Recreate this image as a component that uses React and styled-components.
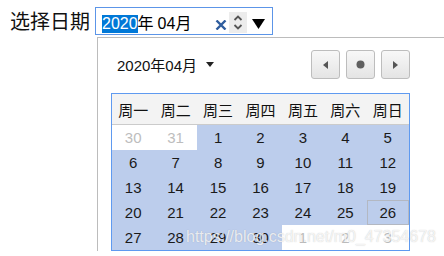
import React from "react";
import styled, { createGlobalStyle } from "styled-components";

const GlobalStyle = createGlobalStyle`
  html, body {
    margin: 0;
    padding: 0;
    background: #fff;
    overflow: hidden;
  }
  body {
    font-family: "Liberation Sans", "Noto Sans CJK SC", sans-serif;
  }
`;

const Page = styled.div`
  width: 444px;
  height: 256px;
  position: relative;
  padding: 7px 0 0 10px;
  box-sizing: border-box;
`;

const FieldRow = styled.div`
  display: flex;
  align-items: center;
  gap: 5px;
`;

const Label = styled.label`
  font-family: "Noto Sans CJK SC", sans-serif;
  font-size: 20px;
  line-height: 28px;
  color: #111;
`;

const InputWrap = styled.div`
  position: relative;
`;

const InputBox = styled.div`
  width: 178px;
  height: 28px;
  box-sizing: border-box;
  border: 1px solid #5c95e8;
  display: flex;
  align-items: center;
  padding: 6px 0 0 6px;
  font-size: 16px;
  color: #000;
`;

const Segment = styled.span`
  line-height: 18px;
  font-family: "Liberation Sans", "Noto Sans CJK SC", sans-serif;
  background: ${(p) => (p.$selected ? "#0078d7" : "transparent")};
  color: ${(p) => (p.$selected ? "#fff" : "#000")};
  margin-right: ${(p) => p.$gap || 0}px;
`;

const Controls = styled.div`
  margin-left: auto;
  display: flex;
  align-items: center;
  height: 100%;
`;

const ClearIcon = styled.svg`
  width: 12px;
  height: 10px;
  margin-right: 2px;
  margin-top: 1px;
`;

const Spinner = styled.div`
  width: 18px;
  height: 21px;
  background: #ececec;
  display: flex;
  align-items: center;
  justify-content: center;
  margin-top: -4px;
`;

const DropArrow = styled.svg`
  width: 13px;
  height: 10px;
  margin: 0 7px 0 5px;
`;

const Popup = styled.div`
  position: absolute;
  top: 30px;
  left: 2px;
  width: 360px;
  background: #fff;
  border-top: 1px solid #bcbcbc;
  border-left: 1px solid #bcbcbc;
  padding: 12px 0 0 13px;
  box-sizing: border-box;
`;

const PopHeader = styled.div`
  width: 299px;
  height: 29px;
  display: flex;
  align-items: center;
  justify-content: space-between;
`;

const MonthTitle = styled.div`
  display: flex;
  align-items: center;
  gap: 9px;
  padding-left: 6px;
  font-size: 15px;
  color: #111;
`;

const NavGroup = styled.div`
  display: flex;
  gap: 6px;
`;

const NavButton = styled.div`
  width: 29px;
  height: 29px;
  box-sizing: border-box;
  border: 1px solid #bdbdbd;
  border-radius: 3px;
  background: linear-gradient(#f8f8f8, #e4e4e4);
  display: flex;
  align-items: center;
  justify-content: center;
`;

const Table = styled.div`
  margin-top: 14px;
  width: 299px;
  box-sizing: border-box;
  border: 1px solid #5f9af0;
`;

const HeadRow = styled.div`
  display: grid;
  grid-template-columns: repeat(7, 1fr);
  height: 31px;
  box-sizing: border-box;
  background: #f3f3f3;
  border-bottom: 1px solid #cbcbcb;
`;

const HeadCell = styled.div`
  display: flex;
  align-items: center;
  justify-content: center;
  font-family: "Noto Sans CJK SC", sans-serif;
  font-size: 15px;
  color: #111;
`;

const DayGrid = styled.div`
  display: grid;
  grid-template-columns: repeat(7, 1fr);
  grid-auto-rows: 25px;
`;

const DayCell = styled.div`
  display: flex;
  align-items: center;
  justify-content: center;
  font-size: 15px;
  background: ${(p) => (p.$other ? "#fff" : "#bccdec")};
  color: ${(p) => (p.$other ? "#bdbdbd" : "#1a1a1a")};
  box-shadow: ${(p) => (p.$today ? "inset 0 0 0 1px #b3b8c2" : "none")};
`;

const Watermark = styled.div`
  position: absolute;
  left: 186px;
  top: 228px;
  font-size: 16px;
  white-space: nowrap;
  color: rgba(255, 255, 255, 0.78);
  text-shadow: 0 0 1px rgba(90, 90, 90, 0.35);
  pointer-events: none;
`;

const weekdays = ["周一", "周二", "周三", "周四", "周五", "周六", "周日"];

const days = [
  { d: 30, other: true },
  { d: 31, other: true },
  ...Array.from({ length: 30 }, (_, i) => ({ d: i + 1 })),
  { d: 1, other: true },
  { d: 2, other: true },
  { d: 3, other: true },
];

export default function App() {
  return (
    <>
      <GlobalStyle />
      <Page>
        <FieldRow>
          <Label>选择日期</Label>
          <InputWrap>
            <InputBox>
              <Segment $selected>2020</Segment>
              <Segment $gap={4}>年</Segment>
              <Segment>04</Segment>
              <Segment>月</Segment>
              <Controls>
                <ClearIcon viewBox="0 0 12 10">
                  <path d="M1.5 0.5 L10.5 9.5 M10.5 0.5 L1.5 9.5" stroke="#2f5d9e" strokeWidth="2.4" />
                </ClearIcon>
                <Spinner>
                  <svg width="10" height="17" viewBox="0 0 10 17">
                    <path d="M1.5 6 L5 2.5 L8.5 6" fill="none" stroke="#555" strokeWidth="1.8" />
                    <path d="M1.5 11 L5 14.5 L8.5 11" fill="none" stroke="#555" strokeWidth="1.8" />
                  </svg>
                </Spinner>
                <DropArrow viewBox="0 0 13 10">
                  <path d="M0 0 H13 L6.5 10 Z" fill="#000" />
                </DropArrow>
              </Controls>
            </InputBox>
            <Popup>
              <PopHeader>
                <MonthTitle>
                  <span>2020年04月</span>
                  <svg width="8" height="5" viewBox="0 0 8 5">
                    <path d="M0 0 H8 L4 5 Z" fill="#222" />
                  </svg>
                </MonthTitle>
                <NavGroup>
                  <NavButton>
                    <svg width="5" height="8" viewBox="0 0 5 8">
                      <path d="M5 0 V8 L0 4 Z" fill="#555" />
                    </svg>
                  </NavButton>
                  <NavButton>
                    <svg width="9" height="9" viewBox="0 0 9 9">
                      <circle cx="4.5" cy="4.5" r="4" fill="#5f5f5f" />
                    </svg>
                  </NavButton>
                  <NavButton>
                    <svg width="5" height="8" viewBox="0 0 5 8">
                      <path d="M0 0 V8 L5 4 Z" fill="#555" />
                    </svg>
                  </NavButton>
                </NavGroup>
              </PopHeader>
              <Table>
                <HeadRow>
                  {weekdays.map((w) => (
                    <HeadCell key={w}>{w}</HeadCell>
                  ))}
                </HeadRow>
                <DayGrid>
                  {days.map((day, i) => (
                    <DayCell key={i} $other={day.other} $today={!day.other && day.d === 26}>
                      {day.d}
                    </DayCell>
                  ))}
                </DayGrid>
              </Table>
            </Popup>
          </InputWrap>
        </FieldRow>
        <Watermark>https://blog.csdn.net/m0_47354678</Watermark>
      </Page>
    </>
  );
}
